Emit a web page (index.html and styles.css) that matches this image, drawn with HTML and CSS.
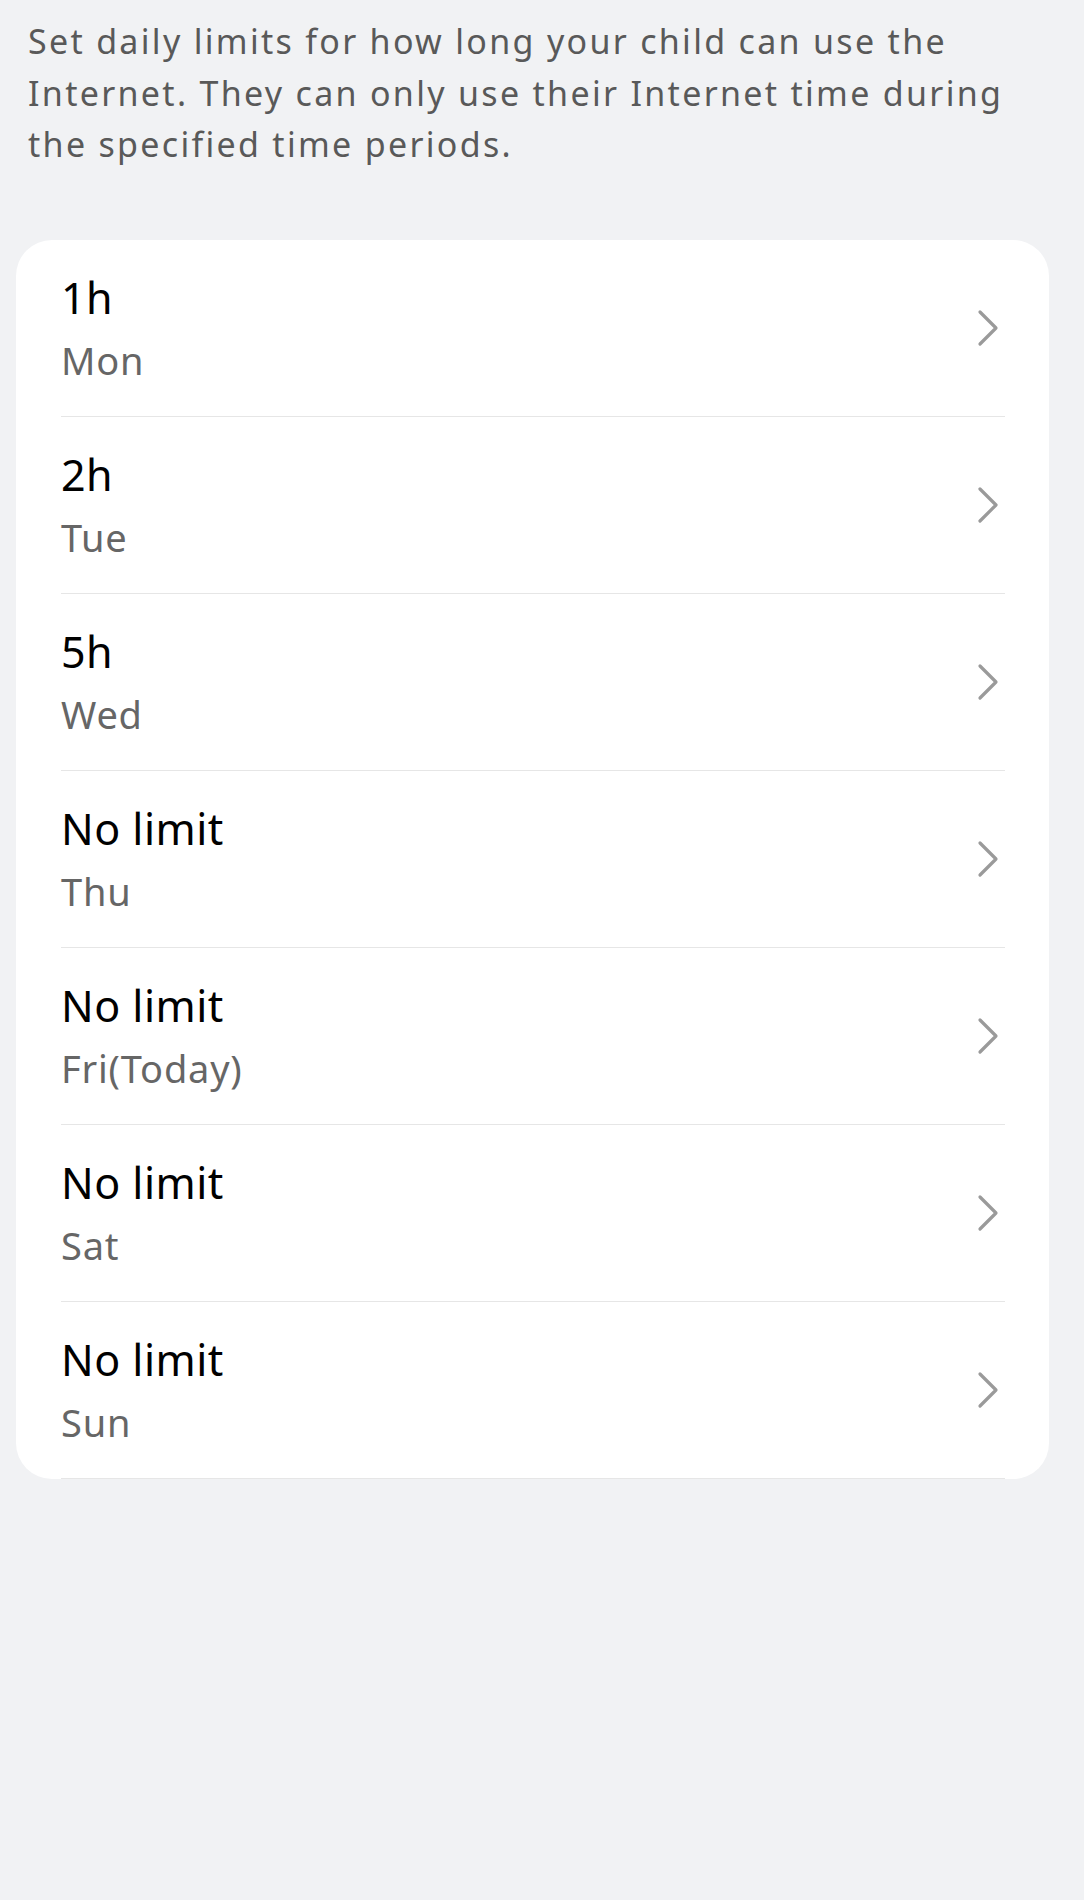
FILE: index.html
```html
<!DOCTYPE html>
<html lang="en">
<head>
<meta charset="utf-8">
<title>Daily limits</title>
<link rel="stylesheet" href="styles.css">
</head>
<body>
<p class="intro">Set daily limits for how long your child can use the Internet. They can only use their Internet time during the specified time periods.</p>
<div class="card">
  <div class="row"><div class="text"><div class="title">1h</div><div class="sub">Mon</div></div><svg class="chev" viewBox="0 0 22 38"><polyline points="3,3 19,19 3,35"/></svg></div>
  <div class="row"><div class="text"><div class="title">2h</div><div class="sub">Tue</div></div><svg class="chev" viewBox="0 0 22 38"><polyline points="3,3 19,19 3,35"/></svg></div>
  <div class="row"><div class="text"><div class="title">5h</div><div class="sub">Wed</div></div><svg class="chev" viewBox="0 0 22 38"><polyline points="3,3 19,19 3,35"/></svg></div>
  <div class="row"><div class="text"><div class="title">No limit</div><div class="sub">Thu</div></div><svg class="chev" viewBox="0 0 22 38"><polyline points="3,3 19,19 3,35"/></svg></div>
  <div class="row"><div class="text"><div class="title">No limit</div><div class="sub">Fri(Today)</div></div><svg class="chev" viewBox="0 0 22 38"><polyline points="3,3 19,19 3,35"/></svg></div>
  <div class="row"><div class="text"><div class="title">No limit</div><div class="sub">Sat</div></div><svg class="chev" viewBox="0 0 22 38"><polyline points="3,3 19,19 3,35"/></svg></div>
  <div class="row"><div class="text"><div class="title">No limit</div><div class="sub">Sun</div></div><svg class="chev" viewBox="0 0 22 38"><polyline points="3,3 19,19 3,35"/></svg></div>
</div>
</body>
</html>
```
FILE: styles.css
```css
html, body {
  margin: 0;
  padding: 0;
  background: #f1f2f4;
}
body {
  font-family: "Noto Sans", "Open Sans", sans-serif;
  min-height: 1900px;
}
.intro {
  margin: 0;
  padding: 16px 26px 0 28px;
  font-size: 34px;
  line-height: 51.5px;
  letter-spacing: 2.3px;
  color: #595959;
}
.card {
  margin: 69px 35px 0 16px;
  background: #ffffff;
  border-radius: 36px;
}
.row {
  display: flex;
  align-items: center;
  justify-content: space-between;
  height: 176px;
  margin: 0 44px 0 45px;
  border-bottom: 1.5px solid #e6e6e6;
  box-sizing: content-box;
}
.text {
  display: flex;
  flex-direction: column;
  padding-top: 2px;
}
.title {
  font-size: 43px;
  line-height: 62px;
  letter-spacing: 0.5px;
  color: #000000;
}
.sub {
  font-size: 38px;
  line-height: 62px;
  letter-spacing: 0.8px;
  color: #666666;
}
.chev {
  width: 22px;
  height: 38px;
  margin-right: 6px;
  fill: none;
  stroke: #9a9a9a;
  stroke-width: 3.2;
  stroke-linecap: round;
  stroke-linejoin: round;
}
```
